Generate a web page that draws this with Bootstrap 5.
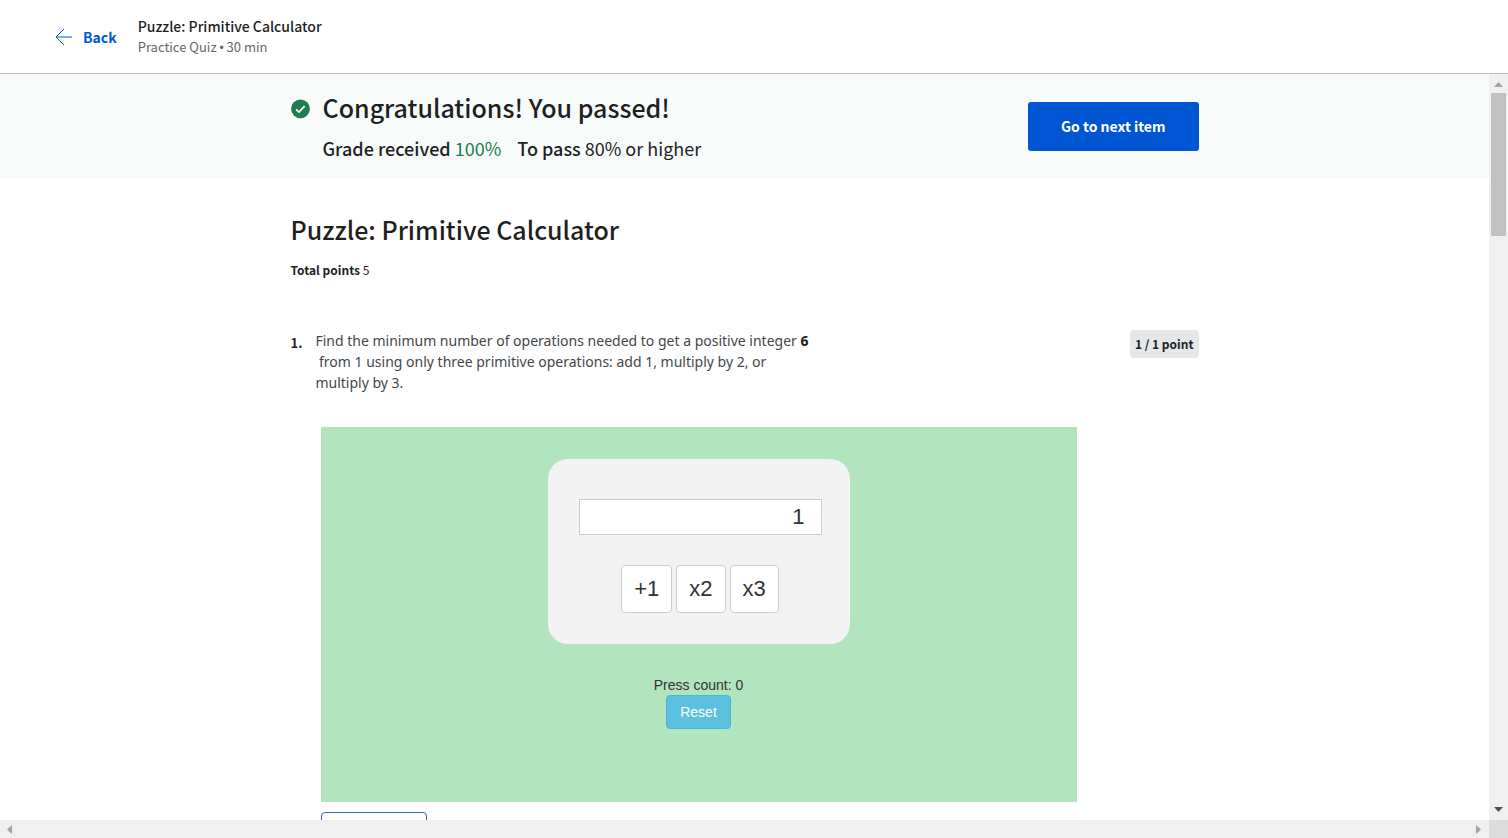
<!DOCTYPE html>
<html lang="en">
<head>
<meta charset="utf-8">
<meta name="viewport" content="width=device-width, initial-scale=1">
<title>Puzzle: Primitive Calculator</title>
<link href="https://cdn.jsdelivr.net/npm/bootstrap@5.3.0/dist/css/bootstrap.min.css" rel="stylesheet">
<style>
  body { font-family: "Noto Sans CJK SC", "Open Sans", sans-serif; color: #1f1f1f; font-size: 12px; line-height: 20px; }
  .top-bar { border-bottom: 1px solid #bdbdbd; padding: 16px 55px; gap: 21px; }
  .back-link { color: #0056d2; font-size: 14px; gap: 10px; }
  .item-title { font-size: 14px; line-height: 21px; font-weight: 500; }
  .item-meta { color: #666; font-size: 13px; line-height: 20px; }
  .dot { font-family: "Liberation Sans", Arial, sans-serif; font-size: 12px; line-height: 1; }
  .page-width { max-width: 908px; }
  .result-banner { background: #f7fbfa; padding: 17px 0; }
  .headline { font-size: 25px; line-height: 32px; font-weight: 500; margin-bottom: 11px; }
  .grade-line { font-size: 18px; line-height: 28px; }
  .grade-line strong { font-weight: 500; }
  .quiz-title { margin: 34px 0 15px; }
  .passing { color: #1d7c50; }
  .btn-next { --bs-btn-color: #fff; --bs-btn-bg: #0056d2; --bs-btn-hover-bg: #00419e; --bs-btn-hover-color: #fff; --bs-btn-border-radius: 3px; font-size: 14px; line-height: 21px; padding: 13px 32px; font-weight: 700; }
  .question { margin-top: 50px; gap: 13px; }
  .question-number { font-size: 13px; line-height: 26px; }
  .prompt { max-width: 510px; font-family: "Noto Sans", "Open Sans", sans-serif; font-size: 14px; line-height: 21px; color: #43474a; white-space: pre-line; }
  .prompt strong { color: #1f1f1f; }
  .point-tag { background: #e5e7e8; border-radius: 4px; padding: 4px 5px; font-weight: 700; }
  .puzzle { margin: 34px 0 0 30px; width: 756px; max-width: 100%; background: #b2e4bd; padding: 32px 0 73px; font-family: "Liberation Sans", Arial, sans-serif; font-size: 14px; line-height: 20px; color: #333; }
  .calculator { width: 302px; background: #f3f3f3; border-radius: 20px; padding: 40px 28px 31px 31px; margin-bottom: 31px; }
  .calc-display { height: 36px; border: 1px solid #ccc; color: #333; font-size: 22px; padding: 0 16px; background: #fff; }
  .key-row { margin-top: 30px; gap: 4px; }
  .btn-key { --bs-btn-color: #333; --bs-btn-bg: #fff; --bs-btn-border-color: #ccc; --bs-btn-hover-bg: #e6e6e6; --bs-btn-border-radius: 4px; font-size: 22px; line-height: 30px; padding: 8px 12px; }
  .btn-reset { --bs-btn-color: #fff; --bs-btn-bg: #5bc0de; --bs-btn-border-color: #46b8da; --bs-btn-hover-color: #fff; --bs-btn-hover-bg: #31b0d5; --bs-btn-border-radius: 4px; font-size: 14px; line-height: 20px; padding: 6px 13px; }
  .btn-keep { --bs-btn-border-color: #2a6ab8; --bs-btn-border-radius: 4px; width: 106px; height: 36px; margin: 10px 0 0 30px; }
  .bar-track { background: #f0f0f0; }
  .bar-v { width: 19px; padding: 8px 0; }
  .bar-thumb { width: 15px; height: 143px; background: #c1c1c1; margin-top: 6px; }
  .bar-h { height: 18px; padding-left: 7px; }
  .bar-corner { width: 19px; background: #dcdcdc; }
</style>
</head>
<body class="vh-100 d-flex flex-column overflow-hidden">
<header class="top-bar d-flex align-items-center flex-shrink-0">
  <a class="back-link d-flex align-items-center fw-bold text-decoration-none" href="#">
    <svg width="18" height="18" viewBox="0 0 18 18" fill="none" stroke="currentColor" aria-hidden="true"><path d="M17 9H1M9 1 1 9l8 8"/></svg>
    Back
  </a>
  <div>
    <div class="item-title">Puzzle: Primitive Calculator</div>
    <div class="item-meta">Practice Quiz <span class="dot">•</span> 30 min</div>
  </div>
</header>
<div class="d-flex flex-grow-1 overflow-hidden">
  <main class="flex-grow-1 overflow-hidden">
    <section class="result-banner">
      <div class="page-width mx-auto d-flex align-items-center justify-content-between">
        <div class="d-flex gap-2">
          <svg class="flex-shrink-0 me-1 mt-2" width="20" height="20" viewBox="0 0 20 20" aria-hidden="true"><circle cx="9.500" cy="9.800" r="9.400" fill="#1d7c50"/><path d="m5 10.300 3 2.800 5.600-6" fill="none" stroke="#fff" stroke-width="1.800"/></svg>
          <div>
            <h1 class="headline">Congratulations! You passed!</h1>
            <div class="grade-line d-flex gap-3"><span><strong>Grade received</strong> <span class="passing">100%</span></span><span><strong>To pass</strong> 80% or higher</span></div>
          </div>
        </div>
        <button type="button" class="btn btn-next">Go to next item</button>
      </div>
    </section>
    <section class="page-width mx-auto">
      <h2 class="headline quiz-title">Puzzle: Primitive Calculator</h2>
      <div><strong>Total points</strong> 5</div>
      <div class="question d-flex align-items-start">
        <strong class="question-number">1.</strong>
        <p class="prompt mb-0">Find the minimum number of operations needed to get a positive integer <strong>6</strong>
&nbsp;from 1 using only three primitive operations: add 1, multiply by 2, or
multiply by 3.</p>
        <span class="point-tag ms-auto">1 / 1 point</span>
      </div>
      <div class="puzzle d-flex flex-column align-items-center">
        <div class="calculator">
          <input class="calc-display form-control rounded-0 text-end" type="text" value="1" aria-label="Current value">
          <div class="key-row d-flex justify-content-center">
            <button type="button" class="btn btn-key">+1</button>
            <button type="button" class="btn btn-key">x2</button>
            <button type="button" class="btn btn-key">x3</button>
          </div>
        </div>
        <div>Press count: 0</div>
        <button type="button" class="btn btn-reset">Reset</button>
      </div>
      <button type="button" class="btn btn-keep" aria-label="Keep score"></button>
    </section>
  </main>
  <div class="bar-track bar-v d-flex flex-column align-items-center flex-shrink-0" aria-hidden="true">
    <svg width="9" height="5"><path d="M0 5 4.500 0 9 5z" fill="#a3a3a3"/></svg>
    <div class="bar-thumb"></div>
    <svg class="mt-auto" width="9" height="5"><path d="M0 0 4.500 5 9 0z" fill="#505050"/></svg>
  </div>
</div>
<div class="bar-track bar-h d-flex align-items-center flex-shrink-0" aria-hidden="true">
  <svg width="5" height="9"><path d="M5 0 0 4.500 5 9z" fill="#a3a3a3"/></svg>
  <svg class="ms-auto me-2" width="5" height="9"><path d="M0 0 5 4.500 0 9z" fill="#a3a3a3"/></svg>
  <div class="bar-corner h-100"></div>
</div>
<script src="https://cdn.jsdelivr.net/npm/bootstrap@5.3.0/dist/js/bootstrap.bundle.min.js"></script>
</body>
</html>
